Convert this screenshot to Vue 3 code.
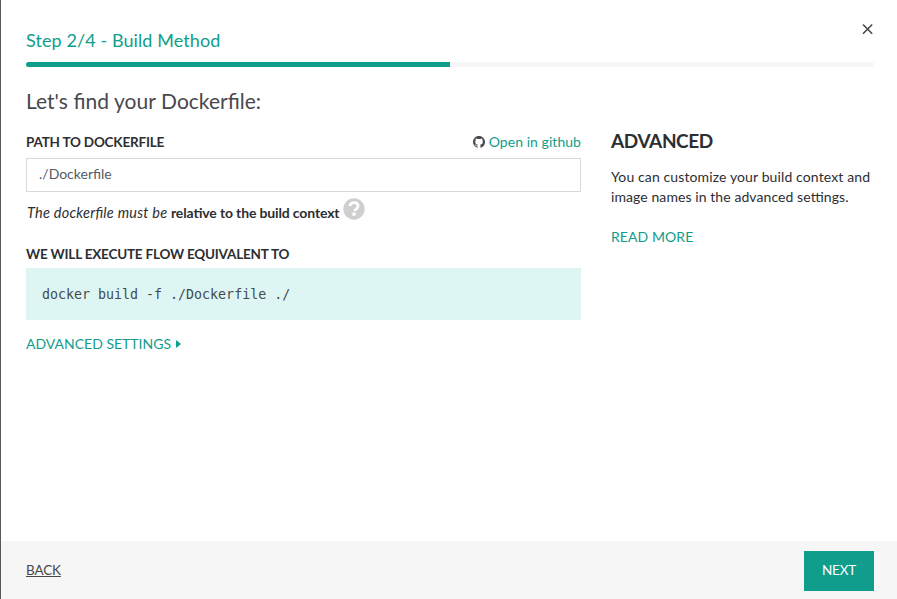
<script setup>
import { ref } from 'vue'

const path = ref('./Dockerfile')
const progress = 50
</script>

<template>
  <main class="dialog">
    <header class="head">
      <div class="title-row">
        <h1 class="step">Step 2/4 - Build Method</h1>
        <button class="close" aria-label="Close">
          <svg viewBox="0 0 12 12" width="12" height="12"><path d="M1 1.5 10.2 10.7M10.2 1.5 1 10.7" /></svg>
        </button>
      </div>
      <div class="track"><div class="bar" :style="{ width: progress + '%' }"></div></div>
    </header>
    <div class="body">
      <h2 class="question">Let's find your Dockerfile:</h2>
      <div class="columns">
        <section class="form">
          <div class="label-row">
            <label class="label" for="path">PATH TO DOCKERFILE</label>
            <a class="github">
              <svg viewBox="0 0 16 16" width="12" height="12"><path d="M8 0C3.58 0 0 3.58 0 8c0 3.54 2.29 6.53 5.47 7.59.4.07.55-.17.55-.38 0-.19-.01-.82-.01-1.49-2.01.37-2.53-.49-2.69-.94-.09-.23-.48-.94-.82-1.13-.28-.15-.68-.52-.01-.53.63-.01 1.08.58 1.23.82.72 1.21 1.87.87 2.33.66.07-.52.28-.87.51-1.07-1.78-.2-3.64-.89-3.64-3.95 0-.87.31-1.59.82-2.15-.08-.2-.36-1.02.08-2.12 0 0 .67-.21 2.2.82.64-.18 1.32-.27 2-.27s1.36.09 2 .27c1.53-1.04 2.2-.82 2.2-.82.44 1.1.16 1.92.08 2.12.51.56.82 1.27.82 2.15 0 3.07-1.87 3.75-3.65 3.95.29.25.54.73.54 1.48 0 1.07-.01 1.93-.01 2.2 0 .21.15.46.55.38A8.01 8.01 0 0 0 16 8c0-4.42-3.58-8-8-8z" /></svg>
              <span class="github-text">Open in github</span>
            </a>
          </div>
          <input id="path" v-model="path" class="input" type="text" spellcheck="false">
          <div class="hint">
            <span class="hint-text"><em>The dockerfile must be</em> <strong>relative to the build context</strong></span>
            <svg class="help" viewBox="0 0 22 22" width="22" height="22">
              <circle cx="11" cy="11" r="10.7" />
              <path d="M7.1 8C7.3 5.7 8.9 4.7 11 4.7c2.3 0 4.1 1.3 4.1 3.4 0 1.5-.9 2.2-1.9 2.9-1 .7-1.3 1-1.3 2.1" />
              <rect x="9.4" y="14.5" width="3.3" height="3.3" />
            </svg>
          </div>
          <div class="label flow-label">WE WILL EXECUTE FLOW EQUIVALENT TO</div>
          <pre class="command">docker build -f {{ path }} ./</pre>
          <a class="advanced"><span class="advanced-text">ADVANCED SETTINGS</span>
            <svg viewBox="0 0 5 8" width="5" height="8"><path d="M0 0 5 4 0 8z" /></svg>
          </a>
        </section>
        <aside class="aside">
          <h3 class="aside-title">ADVANCED</h3>
          <p class="aside-copy">You can customize your build context and<br>image names in the advanced settings.</p>
          <a class="more">READ MORE</a>
        </aside>
      </div>
    </div>
    <footer class="foot">
      <a class="back">BACK</a>
      <button class="next">NEXT</button>
    </footer>
  </main>
</template>

<style>
body { margin: 0; background: #fff; }
</style>

<style scoped>
* { box-sizing: border-box; }
.dialog {
  display: flex;
  flex-direction: column;
  width: 897px;
  height: 599px;
  border-left: 1px solid #58585a;
  background: #fff;
  color: #2d2e32;
  font: 14px/20px Lato, "Liberation Sans", sans-serif;
  font-feature-settings: "liga" 1;
  overflow: hidden;
}
h1, h2, h3, p, pre { margin: 0; font-weight: 400; }
button { padding: 0; border: 0; background: none; font: inherit; }
svg { display: block; }
.head { padding: 22px 23px 0 25px; }
.title-row { display: flex; justify-content: space-between; height: 40px; }
.step { padding-top: 6px; color: #109d8c; font-size: 18px; line-height: 24px; letter-spacing: .09px; white-space: nowrap; }
.close { width: 12px; height: 12px; margin-top: 1px; }
.close path { fill: none; stroke: #48484c; stroke-width: 1.6; }
.track { height: 5px; border-radius: 3px; background: #f6f6f6; overflow: hidden; }
.bar { height: 100%; background: #109d8c; }
.body { flex: 1; padding: 20px 23px 0 25px; }
.question { color: #48484c; font-size: 21px; line-height: 28px; word-spacing: .3px; white-space: nowrap; }
.columns { display: flex; gap: 30px; padding-top: 17px; }
.form { width: 555px; }
.label-row { display: flex; justify-content: space-between; height: 26px; }
.label { font-size: 13.5px; font-weight: 700; line-height: 20px; letter-spacing: -.2px; white-space: nowrap; }
.github { display: flex; gap: 4px; color: #109d8c; white-space: nowrap; }
.github svg { margin-top: 4px; fill: #48484c; }
.github-text { letter-spacing: .05px; }
.input {
  display: block;
  width: 100%;
  height: 34px;
  padding: 0 12px 3px;
  border: 1px solid #d5dbda;
  border-radius: 0;
  background: #fff;
  color: #525b64;
  font: 14px/20px Lato, sans-serif;
  outline: none;
}
.hint { display: flex; gap: 4px; height: 52px; padding-top: 7px; white-space: nowrap; }
.hint-text { padding: 4px 0 0 1px; }
.hint-text em { font-size: 14.5px; letter-spacing: .24px; }
.hint-text strong { letter-spacing: -.14px; }
.help { margin-top: -1px; }
.help circle { fill: #cfcfcf; }
.help path { fill: none; stroke: #fff; stroke-width: 2.8; }
.help rect { fill: #fff; }
.flow-label { height: 24px; }
.command {
  height: 52px;
  padding: 17px 16px 15px;
  background: #def6f3;
  color: #444b4d;
  font: 13.3px/20px "DejaVu Sans Mono", monospace;
}
.advanced { display: flex; align-items: center; gap: 5px; margin-top: 14px; color: #109d8c; white-space: nowrap; }
.advanced svg { fill: #109d8c; }
.aside { white-space: nowrap; }
.aside-title { font-size: 19px; font-weight: 700; line-height: 24px; letter-spacing: -.4px; margin-top: -3px; }
.aside-copy { margin-top: 14px; letter-spacing: .08px; }
.aside-copy::first-line { letter-spacing: .12px; }
.more { display: block; margin-top: 20px; color: #109d8c; letter-spacing: .08px; }
.foot {
  display: flex;
  align-items: center;
  justify-content: space-between;
  height: 58px;
  padding: 1px 23px 0 25px;
  background: #f6f6f6;
}
.back { padding-bottom: 2px; color: #48484c; font-size: 13.5px; letter-spacing: -.15px; text-decoration: underline; }
.next { width: 70px; height: 40px; padding-bottom: 2px; background: #109d8c; color: #fff; font-size: 13.5px; letter-spacing: -.15px; }
</style>
